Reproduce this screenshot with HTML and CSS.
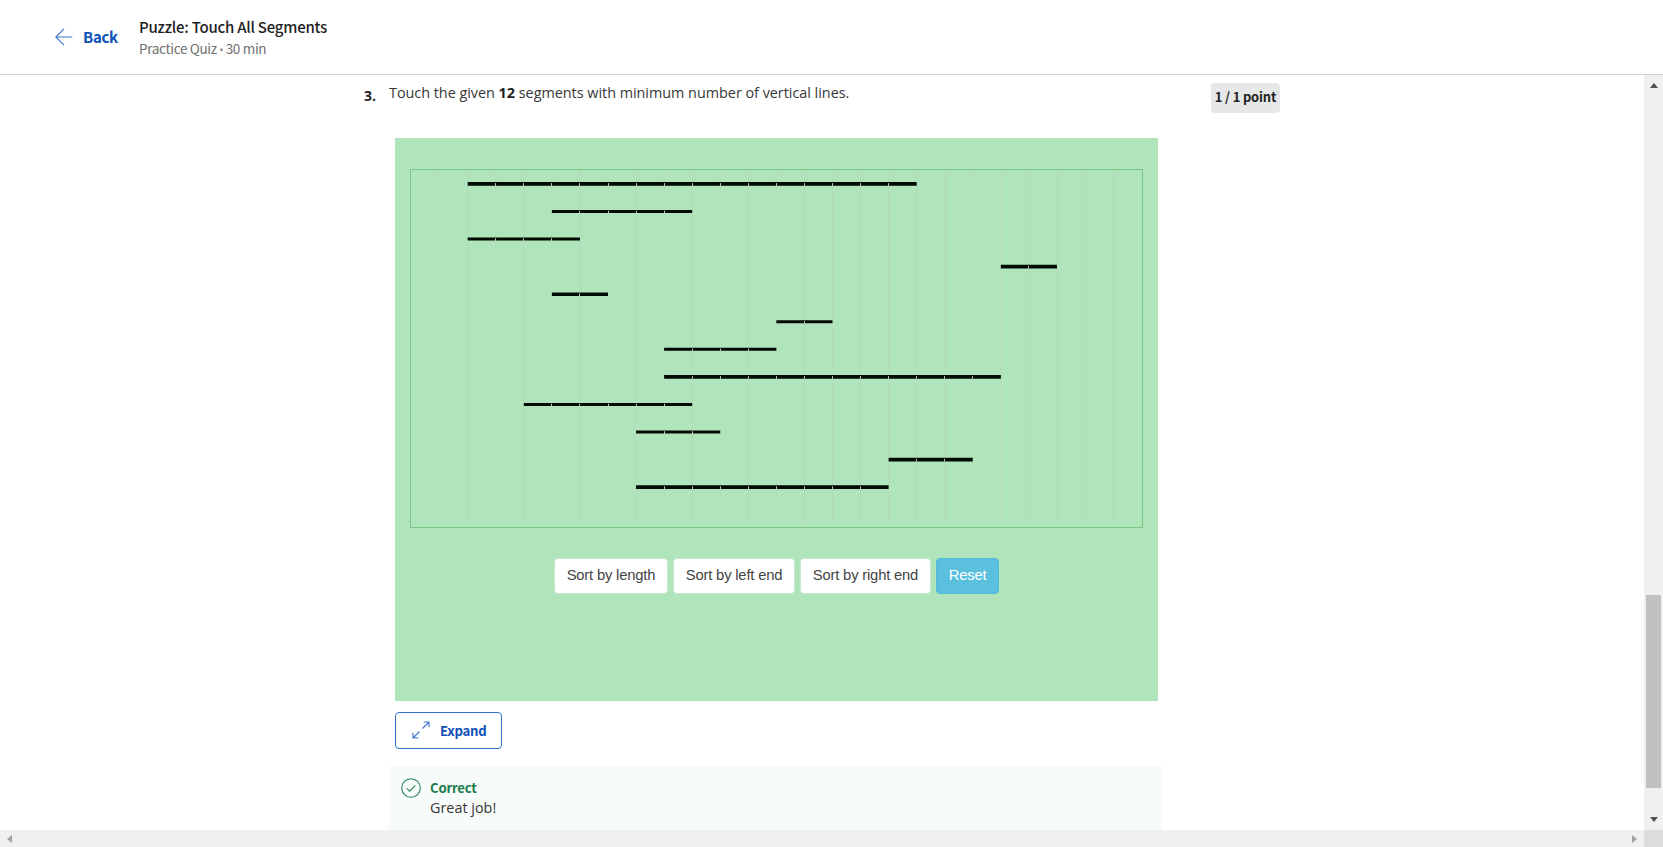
FILE: index.html
```html
<!DOCTYPE html>
<html lang="en">
<head>
<meta charset="utf-8">
<title>Puzzle: Touch All Segments</title>
<link rel="stylesheet" href="styles.css">
</head>
<body>
<header class="header">
  <a class="back"><svg width="18" height="18" viewBox="0 0 18 18"><path d="M17.3 9H1M9 .8L.8 9 9 17.2"/></svg><span>Back</span></a>
  <div class="heading"><h1 class="title">Puzzle: Touch All Segments</h1><p class="meta">Practice Quiz <span class="dot">•</span> 30 min</p></div>
</header>
<div class="body">
  <main class="content">
    <div class="number">3.</div>
    <section class="question">
      <p class="prompt">Touch the given <b>12</b> segments with minimum number of vertical lines.</p>
      <div class="puzzle">
        <svg class="board" width="733" height="360" viewBox="410 169 733 360"><rect class="frame" x="410.5" y="169.5" width="732" height="358"/><g id="grid"></g><g id="segments"></g></svg>
        <div class="actions"><button class="btn">Sort by length</button><button class="btn">Sort by left end</button><button class="btn">Sort by right end</button><button class="btn reset">Reset</button></div>
      </div>
      <button class="expand"><svg width="18" height="18" viewBox="0 0 18 18"><path d="M10.5 7.5L17 1M11.7 1H17v5.3M7.5 10.5L1 17M1 11.7V17h5.3"/></svg><span>Expand</span></button>
      <div class="feedback">
        <svg width="20" height="20" viewBox="0 0 20 20"><circle cx="10" cy="10" r="9.3"/><path d="M5.8 10.3l2.8 2.8 5.6-5.8"/></svg>
        <div><strong class="correct">Correct</strong><p class="praise">Great job!</p></div>
      </div>
    </section>
    <div class="points">1 / 1 point</div>
  </main>
  <div class="vbar"><i class="up"></i><i class="thumb"></i><i class="down"></i></div>
</div>
<div class="hbar"><i class="left"></i><i class="right"></i><span class="corner"></span></div>
<script src="board.js"></script>
</body>
</html>
```
FILE: styles.css
```css
* { box-sizing: border-box; }
body { margin: 0; width: 1663px; height: 847px; overflow: hidden; display: flex; flex-direction: column; background: #fff; color: #1f1f1f; font-family: "Open Sans", sans-serif; }
h1, p { margin: 0; }
button { font: inherit; margin: 0; }
svg { flex: none; fill: none; }
.header { height: 75px; flex: none; border-bottom: 1px solid #d2d2d2; display: flex; padding-left: 55px; font-family: "Noto Sans CJK SC", sans-serif; }
.back { width: 84px; height: 74px; display: flex; align-items: center; gap: 10px; color: #0f51b8; font-size: 15px; font-weight: 700; letter-spacing: -.3px; }
.back svg { stroke: #3a73c9; stroke-width: 1.1; }
.back span { padding-bottom: 2px; }
.heading { padding-top: 16px; }
.title { font-size: 15px; line-height: 21px; font-weight: 500; letter-spacing: -.24px; white-space: nowrap; }
.meta { font-size: 13.5px; line-height: 22px; letter-spacing: -.32px; color: #707070; white-space: nowrap; }
.dot { font: 10px "Open Sans", sans-serif; }
.body { flex: 1; min-height: 0; display: flex; }
.content { flex: 1; display: flex; padding-left: 364px; overflow: hidden; }
.number { width: 25px; padding-top: 11px; font-size: 14px; line-height: 20px; font-weight: 700; }
.question { width: 773px; flex: none; }
.prompt { height: 63px; padding-top: 8px; font-size: 14.4px; line-height: 20px; letter-spacing: -.02px; color: #373737; white-space: nowrap; }
.prompt b { color: #1f1f1f; }
.puzzle { margin: 0 4px 0 6px; height: 563px; width: 763px; background: #b0e4bb; padding: 31px 15px 0; }
.board { display: block; }
.frame { stroke: #7cc685; }
.grid-line { stroke: #b9d6bc; stroke-width: .7; }
.segment { stroke: #020b03; }
.tick { stroke: #b5cdb8; stroke-width: 1; }
.actions { margin-top: 29px; display: flex; justify-content: center; gap: 4.5px; font-family: "Liberation Sans", sans-serif; font-size: 14.8px; letter-spacing: -.19px; }
.btn { height: 36px; padding: 0 12px 2px; border: 1px solid #c8e8cd; border-radius: 4px; background: #fff; color: #444; letter-spacing: inherit; white-space: nowrap; }
.reset { background: #5bc0de; border-color: #52b9d8; color: #fff; }
.expand { margin: 11px 0 0 6px; width: 107px; height: 37px; display: flex; align-items: center; gap: 10px; padding: 0 0 1px 16px; border: 1px solid #326fc5; border-radius: 4px; background: #fff; color: #0f51b8; font: 700 13.2px "Noto Sans CJK SC", sans-serif; letter-spacing: -.25px; }
.expand svg { stroke: #3a73c9; stroke-width: 1.1; }
.feedback { margin-top: 17px; height: 80px; display: flex; gap: 9px; padding: 12px 0 0 12px; background: #f7fbfa; }
.feedback svg { stroke: #2c8257; stroke-width: 1.1; }
.correct { display: block; color: #1d7c4d; font: 700 13.2px/20px "Noto Sans CJK SC", sans-serif; letter-spacing: -.25px; }
.praise { font-size: 14.4px; line-height: 20px; color: #373737; }
.points { margin: 8px 0 0 49px; width: 69px; height: 30px; flex: none; border-radius: 4px; background: #e5e7e8; text-align: center; white-space: nowrap; font: 700 12.9px/28px "Noto Sans CJK SC", sans-serif; letter-spacing: -.12px; }
.vbar { width: 19px; background: #f0f0f0; display: flex; flex-direction: column; align-items: center; padding: 8px 0 8px; }
.vbar i, .hbar i { display: block; border: 4px solid transparent; }
.vbar .up { border-top: 0; border-bottom: 5px solid #505050; }
.vbar .thumb { width: 15px; height: 193px; margin-top: 507px; border: 0; background: #c1c1c1; }
.vbar .down { margin-top: auto; border-bottom: 0; border-top: 5px solid #505050; }
.hbar { height: 17px; flex: none; background: #f0f0f0; display: flex; align-items: center; padding-left: 7px; }
.hbar .left { border-left: 0; border-right: 5px solid #a0a0a0; }
.hbar .right { margin-left: auto; border-right: 0; border-left: 5px solid #a0a0a0; }
.corner { width: 19px; height: 17px; margin-left: 7px; background: #dcdcdc; }
```
FILE: board.js
```js
const step = 28.06, origin = 467.7, rowStep = 27.57;
const segments = [[0,16],[3,8],[0,4],[19,21],[3,5],[11,13],[7,11],[7,19],[2,8],[6,9],[15,18],[6,15]];
const thin = [1, 2, 5, 6, 8, 9];
const line = (cls, x1, y1, x2, y2, w) =>
  `<line class="${cls}" x1="${x1}" y1="${y1}" x2="${x2}" y2="${y2}"${w ? ` stroke-width="${w}"` : ''}/>`;
let grid = '', bars = '';
for (let i = -1; i <= 23; i++) {
  const x = origin + i * step;
  grid += line('grid-line', x, 170, x, 523);
}
segments.forEach(([a, b], row) => {
  const y = 183.9 + row * rowStep;
  bars += line('segment', origin + a * step, y, origin + b * step, y, thin.includes(row) ? 2.9 : 3.6);
  for (let i = a + 1; i < b; i++) {
    const x = Math.floor(origin + i * step) + .5;
    bars += line('tick', x, y - .8, x, y + 2);
  }
});
document.getElementById('grid').innerHTML = grid;
document.getElementById('segments').innerHTML = bars;
```
